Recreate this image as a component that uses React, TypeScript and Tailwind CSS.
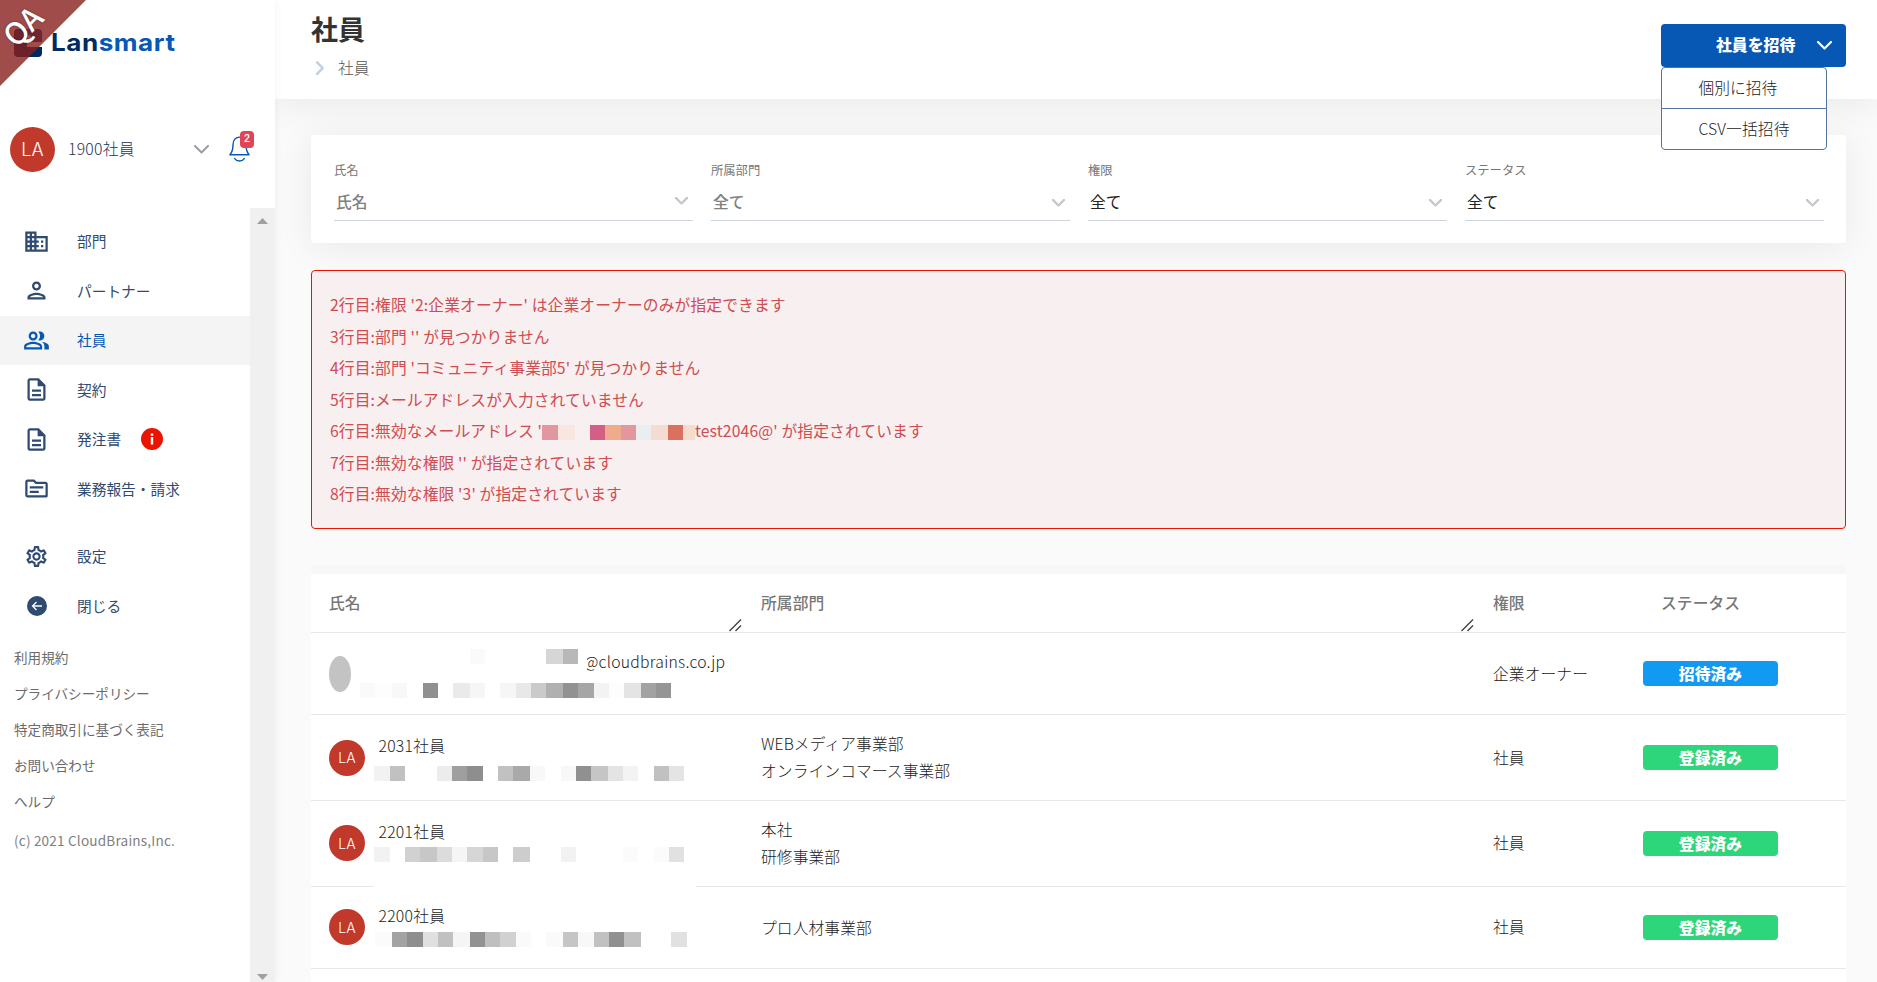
import type { ReactNode } from "react";
import clsx from "clsx";
import {
  MdBusiness,
  MdOutlineDescription,
  MdOutlinePeopleAlt,
  MdOutlinePerson,
  MdOutlineSettings,
  MdOutlineTopic,
} from "react-icons/md";

type Cell = [width: number, color: string];

function Chevron({ className, width = 15, stroke = 2 }: { className?: string; width?: number; stroke?: number }) {
  return (
    <svg width={width} height={(width * 9) / 15} viewBox="0 0 15 9" fill="none" className={className} aria-hidden>
      <path d="M1 1l6.5 6.5L14 1" stroke="currentColor" strokeWidth={stroke} strokeLinecap="round" strokeLinejoin="round" />
    </svg>
  );
}

/** Row of flat blocks covering private text. */
function Mosaic({ cells, className }: { cells: Cell[]; className?: string }) {
  return (
    <span className={clsx("flex h-[15px]", className)}>
      {cells.map(([width, background], i) => (
        <span key={i} className="h-full shrink-0" style={{ width, background }} />
      ))}
    </span>
  );
}

function Ribbon() {
  return (
    <div className="absolute left-0 top-0 z-10 size-[86px]">
      <div className="size-full bg-[rgba(136,31,29,0.8)] [clip-path:polygon(0_0,100%_0,0_100%)]" />
      <span className="absolute left-px top-[8px] -rotate-45 text-[30px] font-medium leading-[34px] text-white [text-shadow:0_0_2px_rgba(0,0,0,.5)]">
        QA
      </span>
    </div>
  );
}

function Logo() {
  return (
    <div className="flex items-center pl-[14px] pt-[28px]">
      <svg width="28" height="28" viewBox="0 0 28 28" aria-hidden>
        <path d="M4 0h20a4 4 0 0 1 4 4v9H17V8a2 2 0 0 0-4 0v5H0V4a4 4 0 0 1 4-4z" fill="#0a3f87" />
        <path d="M0 4a4 4 0 0 1 4-4h9v18H0z" fill="#002a62" />
        <path d="M0 18h28v6a4 4 0 0 1-4 4H4a4 4 0 0 1-4-4z" fill="#002a62" />
      </svg>
      <span className="ml-[9px] mt-px origin-left scale-x-[1.085] font-[Inter] text-[24px] font-bold leading-7 tracking-[0.5px] text-[#002a62]">
        Lan<span className="text-[#0757b5]">smart</span>
      </span>
    </div>
  );
}

function Avatar({ className }: { className?: string }) {
  return (
    <span
      className={clsx(
        "flex shrink-0 items-center justify-center rounded-full bg-[#c0392b] font-[Inter] font-light text-white",
        className,
      )}
    >
      LA
    </span>
  );
}

function Bell() {
  return (
    <div className="relative -mt-px ml-[20px] h-[27px] w-[22px]">
      <svg width="21" height="27" viewBox="0 0 22 28" fill="none" stroke="#0757b5" strokeWidth="1.5" aria-hidden>
        <path d="M1 19.5h20c-3-3.5-3.2-6-3.2-10.5C17.8 4 15 1 11 1S4.2 4 4.2 9c0 4.5-.2 7-3.2 10.5z" strokeLinejoin="round" />
        <path d="M6 23.5c2.5 3.5 7.5 3.5 10 0" strokeLinecap="round" />
      </svg>
      <span className="absolute -top-[5px] left-[11px] flex h-[17px] w-[14px] items-center justify-center rounded-[4px] bg-[#e04557] font-[Roboto] text-[10.5px] font-medium text-white">
        2
      </span>
    </div>
  );
}

function NavItem({ icon, label, active, alert }: { icon: ReactNode; label: string; active?: boolean; alert?: boolean }) {
  return (
    <li
      className={clsx(
        "flex h-[49.5px] items-center pl-[23px] text-[14.7px]",
        active ? "bg-[#f4f4f4] text-[#0757b5]" : "text-[#2f4b70]",
      )}
    >
      <span className="flex w-[27px] justify-center">{icon}</span>
      <span className="ml-[27px]">{label}</span>
      {alert && (
        <svg width="22" height="22" viewBox="0 0 22 22" className="-mt-px ml-[20px]" aria-hidden>
          <circle cx="11" cy="11" r="11" fill="#ea1500" />
          <path d="M9.8 5.5h2.4v2.2H9.8zM9.8 9h2.4v7.5H9.8z" fill="#fff" />
        </svg>
      )}
    </li>
  );
}

const LINKS = ["利用規約", "プライバシーポリシー", "特定商取引に基づく表記", "お問い合わせ", "ヘルプ"];

function Sidebar() {
  return (
    <aside className="relative z-20 flex w-[275px] shrink-0 flex-col bg-white shadow-[0_0_9px_rgba(0,0,0,0.06)]">
      <Ribbon />
      <Logo />
      <div className="mt-[70px] flex h-[45px] items-center pl-[10px]">
        <Avatar className="size-[45px] text-[18px]" />
        <span className="-mt-px ml-[13px] w-[113px] text-[15.75px] font-light tracking-[0.25px] text-[#1d3354]">1900社員</span>
        <Chevron className="ml-[13px] text-[#9a9da3]" />
        <Bell />
      </div>
      <div className="mt-[36px] flex min-h-0 flex-1">
        <nav className="w-[250px] pt-[8.5px]">
          <ul>
            <NavItem icon={<MdBusiness size={27} />} label="部門" />
            <NavItem icon={<MdOutlinePerson size={27} />} label="パートナー" />
            <NavItem icon={<MdOutlinePeopleAlt size={27} className="shrink-0" />} label="社員" active />
            <NavItem icon={<MdOutlineDescription size={27} />} label="契約" />
            <NavItem icon={<MdOutlineDescription size={27} />} label="発注書" alert />
            <NavItem icon={<MdOutlineTopic size={27} />} label="業務報告・請求" />
          </ul>
          <ul className="mt-[18px]">
            <NavItem icon={<MdOutlineSettings size={25} />} label="設定" />
            <NavItem
              icon={
                <svg width="20" height="20" viewBox="0 0 20 20" fill="none" aria-hidden>
                  <circle cx="10" cy="10" r="10" fill="currentColor" />
                  <path d="M15 10H5.5M9.5 6l-4 4 4 4" stroke="#fff" strokeWidth="1.3" />
                </svg>
              }
              label="閉じる"
            />
          </ul>
          <div className="mt-[8px] pl-[14px] text-[13.6px] leading-[36px] text-[#6b6b6b]">
            {LINKS.map((link) => (
              <div key={link}>{link}</div>
            ))}
            <div className="mt-[3px] tracking-[0.18px] text-[#808080]">(c) 2021 CloudBrains,Inc.</div>
          </div>
        </nav>
        <div className="flex w-[25px] flex-col items-center justify-between bg-[#f0f0f0] pb-[2px] pt-[10px] text-[#a0a0a0]">
          <svg width="11" height="6" viewBox="0 0 11 6" aria-hidden>
            <path d="M5.5 0L11 6H0z" fill="currentColor" />
          </svg>
          <svg width="11" height="6" viewBox="0 0 11 6" aria-hidden>
            <path d="M5.5 6L11 0H0z" fill="currentColor" />
          </svg>
        </div>
      </div>
    </aside>
  );
}

function InviteMenu() {
  return (
    <div className="relative h-[43px] w-[185px]">
      <button className="flex h-[43px] w-full items-center rounded-[4px] bg-[#0757b5] pb-px pl-[55px] text-[15.85px] font-black text-white">
        社員を招待
        <Chevron className="ml-[22px]" stroke={2.2} />
      </button>
      <div className="absolute left-0 top-[43px] w-[166px] rounded-[4px] border border-[#54749f] bg-white text-[15.75px] font-light text-[#222]">
        <div className="flex h-[41px] items-center border-b border-[#54749f] pl-[36.5px]">個別に招待</div>
        <div className="flex h-[40px] items-center pb-px pl-[36.5px] tracking-[0.1px]">CSV一括招待</div>
      </div>
    </div>
  );
}

function Filter({ label, value, dark, first }: { label: string; value: string; dark?: boolean; first?: boolean }) {
  return (
    <div className="w-[359px]">
      <div className="text-[12.3px] leading-[18px] text-[#777]">{label}</div>
      <div className="mt-[4px] flex h-[38px] items-center justify-between border-b border-[#ced4da] pl-[2px] pr-[5px]">
        <span className={clsx("text-[15.75px]", dark ? "text-[#222]" : "font-medium text-[#808080]")}>{value}</span>
        <Chevron className={clsx("text-[#c8c8c8]", first ? "-mt-px" : "mt-[3px]")} width={13} stroke={2.8} />
      </div>
    </div>
  );
}

const ERRORS: ReactNode[] = [
  "2行目:権限 '2:企業オーナー' は企業オーナーのみが指定できます",
  "3行目:部門 '' が見つかりません",
  "4行目:部門 'コミュニティ事業部5' が見つかりません",
  "5行目:メールアドレスが入力されていません",
  <>
    6行目:無効なメールアドレス '
    <Mosaic
      className="mt-[3px]"
      cells={[
        [16, "#e0979f"],
        [17, "#f8e6e0"],
        [15, "transparent"],
        [15, "#d35f84"],
        [16, "#f0ab8b"],
        [15, "#e2979f"],
        [15, "#eaeef0"],
        [17, "#f5dcd3"],
        [15, "#da705d"],
        [12, "#f6dcca"],
      ]}
    />
    test2046@' が指定されています
  </>,
  "7行目:無効な権限 '' が指定されています",
  "8行目:無効な権限 '3' が指定されています",
];

type Member = {
  name: string;
  depts: string[];
  role: string;
  cells: Cell[];
  height: string;
  gap: string;
};

const MEMBERS: Member[] = [
  {
    name: "2031社員",
    depts: ["WEBメディア事業部", "オンラインコマース事業部"],
    role: "社員",
    height: "h-[86px]",
    gap: "mt-[8px]",
    cells: [
      [16, "#f2f2f2"], [15, "#c1c1c1"], [32, "transparent"], [15, "#ececec"], [15, "#9f9f9f"], [16, "#8e8e8e"],
      [15, "transparent"], [15, "#c1c1c1"], [17, "#a9a9a9"], [15, "#f8f8f8"], [16, "transparent"], [15, "#f8f8f8"],
      [15, "#909090"], [17, "#c5c5c5"], [15, "#e4e4e4"], [15, "#f3f3f3"], [16, "transparent"], [15, "#c1c1c1"],
      [15, "#e4e4e4"],
    ],
  },
  {
    name: "2201社員",
    depts: ["本社", "研修事業部"],
    role: "社員",
    height: "h-[86px]",
    gap: "mt-[3px]",
    cells: [
      [16, "#f2f2f2"], [15, "transparent"], [15, "#d1d1d1"], [17, "#c7c7c7"], [15, "#dcdcdc"], [15, "#f5f5f5"],
      [16, "#d6d6d6"], [15, "#c7c7c7"], [15, "transparent"], [17, "#cdcdcd"], [31, "transparent"], [15, "#f2f2f2"],
      [47, "transparent"], [15, "#fbfbfb"], [16, "transparent"], [15, "#fbfbfb"], [15, "#e1e1e1"],
    ],
  },
  {
    name: "2200社員",
    depts: ["プロ人材事業部"],
    role: "社員",
    height: "h-[82px]",
    gap: "mt-[4px]",
    cells: [
      [1, "transparent"], [17, "#fbfbfb"], [15, "#a3a3a3"], [16, "#8e8e8e"], [15, "#e0e0e0"], [15, "#c1c1c1"],
      [17, "#f5f5f5"], [15, "#929292"], [15, "#bfbfbf"], [16, "#d1d1d1"], [15, "#fafafa"], [15, "transparent"],
      [17, "#fafafa"], [15, "#c5c5c5"], [16, "#f8f8f8"], [15, "#c1c1c1"], [15, "#909090"], [17, "#c1c1c1"],
      [30, "transparent"], [16, "#e1e1e1"],
    ],
  },
];

function Status({ invited }: { invited?: boolean }) {
  return (
    <span
      className={clsx(
        "ml-[18px] flex h-[25px] w-[135px] items-center justify-center rounded-[4px] pt-px text-[15.75px] font-black text-white",
        invited ? "bg-[#129af3]" : "bg-[#2dd57b]",
      )}
    >
      {invited ? "招待済み" : "登録済み"}
    </span>
  );
}

function ResizeGrip() {
  return (
    <svg width="13" height="13" viewBox="0 0 13 13" className="absolute bottom-0 right-px" stroke="#444" strokeWidth="1.4" aria-hidden>
      <path d="M0.5 12L12 0.5M6.5 12L12 6.5" />
    </svg>
  );
}

const ROW = "relative grid grid-cols-[432px_732px_150px_1fr] items-center border-b border-[#e8e8e8]";

function MemberTable() {
  return (
    <div className="mt-[45px] bg-white text-[15.75px] font-light tracking-[0.08px] text-[#222] shadow-[0_-9px_0_#f7f7f7]">
      <div className={clsx(ROW, "h-[59px] font-medium text-[#777]")}>
        <div className="relative flex h-full items-center pl-[18px]">
          氏名
          <ResizeGrip />
        </div>
        <div className="relative flex h-full items-center pl-[18px]">
          所属部門
          <ResizeGrip />
        </div>
        <div className="pl-[18px]">権限</div>
        <div className="pl-[36px]">ステータス</div>
      </div>

      <div className={clsx(ROW, "h-[82px]")}>
        <div className="flex items-center pl-[18px]">
          <span className="mt-px h-[36px] w-[22px] rounded-[50%] bg-[#c3c3c3]" />
          <div className="ml-[9px] flex flex-col">
            <div className="flex h-[28px]">
              <Mosaic
                className="w-[227px]"
                cells={[
                  [110, "transparent"],
                  [15, "#fafafa"],
                  [61, "transparent"],
                  [17, "#d6d6d6"],
                  [15, "#b8b8b8"],
                ]}
              />
              <span className="-ml-[3px] leading-[26px] tracking-[0.25px]">@cloudbrains.co.jp</span>
            </div>
            <Mosaic
              className="mt-[6px]"
              cells={[
                [15, "#fafafa"], [17, "#fdfdfd"], [15, "#f8f8f8"], [16, "transparent"], [15, "#909090"],
                [15, "transparent"], [17, "#eaeaea"], [15, "#f6f6f6"], [15, "transparent"], [16, "#f6f6f6"],
                [15, "#e8e8e8"], [15, "#cacaca"], [17, "#b0b0b0"], [15, "#929292"], [16, "#a6a6a6"],
                [15, "#f3f3f3"], [15, "#fdfdfd"], [17, "#e4e4e4"], [15, "#a2a2a2"], [15, "#959595"],
              ]}
            />
          </div>
          {/* left edge of the mask cuts into the @ sign */}
          <span className="absolute left-[270px] top-[16px] h-[30px] w-[6px] bg-white" />
        </div>
        <div />
        <div className="pl-[18px] pt-px">企業オーナー</div>
        <Status invited />
      </div>

      {MEMBERS.map((m, i) => (
        <div key={m.name} className={clsx(ROW, m.height)}>
          <div className="flex items-center pl-[18px]">
            <Avatar className={clsx("size-[36px] text-[14px]", i === 0 && "mt-px")} />
            <div className="ml-[9px] h-[48px] pt-px">
              <div className="pl-[4.5px] leading-[24px] tracking-[0.25px]">{m.name}</div>
              <Mosaic className={m.gap} cells={m.cells} />
            </div>
          </div>
          <div className="pl-[18px] leading-[27px]">
            {m.depts.map((d) => (
              <div key={d}>{d}</div>
            ))}
          </div>
          <div className={clsx("pl-[18px]", i === 0 && "pt-px")}>{m.role}</div>
          <Status />
          {m.name === "2201社員" && <span className="absolute -bottom-px left-[63px] h-px w-[322px] bg-white" />}
        </div>
      ))}
      <div className="h-[40px]" />
    </div>
  );
}

export default function App() {
  return (
    <div className="flex h-[982px] w-full overflow-hidden bg-[#fafafa] font-['Noto_Sans_CJK_JP',sans-serif]">
      <Sidebar />
      <div className="flex min-w-0 flex-1 flex-col">
        <header className="relative z-10 flex h-[99px] shrink-0 justify-between pl-[36px] pr-[31px]">
          <div className="absolute inset-0 -z-10 bg-white shadow-[0_4px_36px_rgba(0,0,0,0.08)]" />
          <div>
            <h1 className="mt-[9px] text-[27px] font-bold leading-[40px] text-[#333]">社員</h1>
            <div className="mt-[6px] flex items-center text-[15.75px] font-light leading-[26px] text-[#555]">
              <Chevron className="ml-[2px] -rotate-90 text-[#c3d0e2]" width={14} stroke={2.7} />
              <span className="ml-[11px]">社員</span>
            </div>
          </div>
          <div className="pt-[24px]">
            <InviteMenu />
          </div>
        </header>
        <main className="pl-[36px] pr-[31px] pt-[36px]">
          <section className="flex h-[108px] gap-[18px] rounded-[4px] bg-white pl-[23px] pt-[26px] shadow-[0_4px_36px_rgba(0,0,0,0.07)]">
            <Filter label="氏名" value="氏名" first />
            <Filter label="所属部門" value="全て" />
            <Filter label="権限" value="全て" dark />
            <Filter label="ステータス" value="全て" dark />
          </section>
          <section className="relative mt-[27px] rounded-[4px] border border-[#ea1500] bg-[#f8eff0] p-[18px] text-[15.75px] leading-[31.5px] tracking-[0.12px] text-[#cf4c50]">
            {ERRORS.map((error, i) => (
              <div key={i} className="flex h-[31.5px] items-center whitespace-pre">
                {error}
              </div>
            ))}
          </section>
          <MemberTable />
        </main>
      </div>
    </div>
  );
}
